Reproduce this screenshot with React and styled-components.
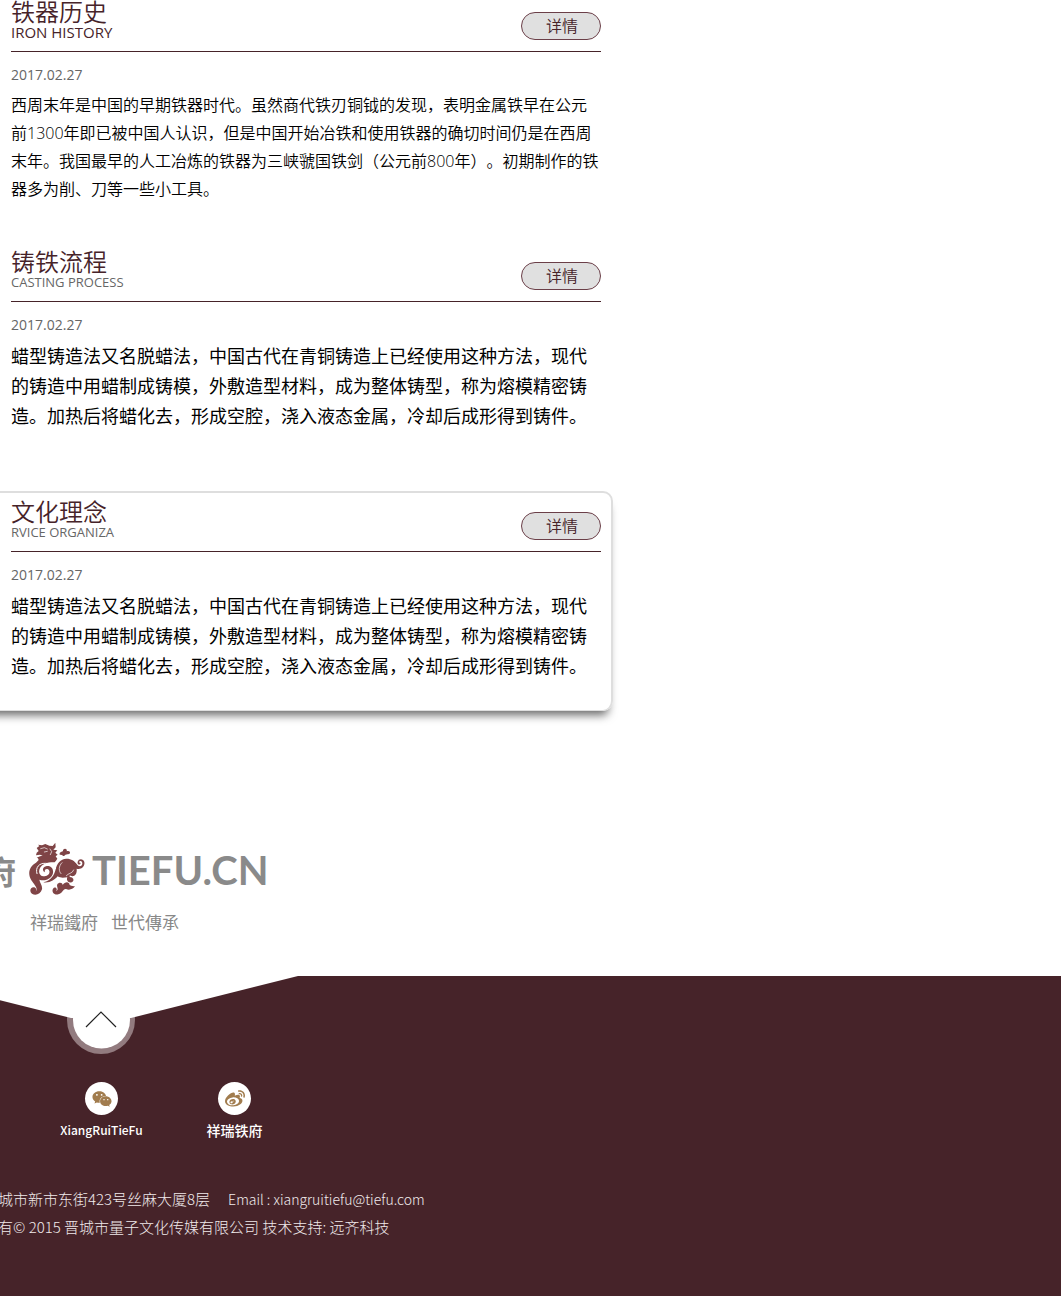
import React from 'react';
import styled, { createGlobalStyle } from 'styled-components';
import { FaWeixin, FaWeibo } from 'react-icons/fa';

const GlobalStyle = createGlobalStyle`
  *, *::before, *::after { box-sizing: border-box; }
  body {
    margin: 0;
    background: #fff;
    font-family: "Open Sans", "Noto Sans CJK SC", sans-serif;
    text-spacing-trim: space-all;
    color: #000;
  }
  h2, p { margin: 0; font-weight: 400; }
`;

const Page = styled.div`
  display: flex;
  flex-direction: column;
  overflow: hidden;
`;

const Articles = styled.main`
  display: flex;
  flex-direction: column;
  gap: 30px;
  max-width: 633px;
  margin: -9px 0 0 -20px;
`;

const Card = styled.article`
  min-height: 220px;
  padding: 0 10px 0 29px;
  border: 2px solid ${({ $active }) => ($active ? '#dedede' : 'transparent')};
  border-bottom-width: 1px;
  border-radius: 10px;
  box-shadow: ${({ $active }) => ($active ? '0 9px 10px -5px rgba(0, 0, 0, 0.6)' : 'none')};
`;

const CardHeader = styled.header`
  display: flex;
  justify-content: space-between;
  align-items: flex-start;
  height: 59px;
  padding-top: 7px;
  border-bottom: 1px solid #462329;
`;

const Title = styled.h2`
  font-size: 24px;
  line-height: 24px;
  font-weight: 350;
  color: #462329;
`;

const Subtitle = styled.p`
  font-size: ${({ $large }) => ($large ? 15 : 13)}px;
  line-height: 16px;
  color: ${({ $large }) => ($large ? '#462329' : '#666')};
`;

const DetailButton = styled.button`
  width: 80px;
  height: 28px;
  margin-top: 12px;
  padding: 0 0 2px 2px;
  border: 1px solid #6b3f48;
  border-radius: 14px;
  background: #e0e0e0;
  color: #462329;
  font: 350 16px/24px "Noto Sans CJK SC", sans-serif;
  cursor: pointer;
`;

const DateText = styled.time`
  display: block;
  padding: 13px 0 6px;
  font-size: 14px;
  line-height: 20px;
  color: #666;
`;

const Body = styled.p`
  font-size: ${({ $small }) => ($small ? 16 : 18)}px;
  line-height: ${({ $small }) => ($small ? 28 : 30)}px;
  font-weight: ${({ $small }) => ($small ? 350 : 400)};
`;

const Line = styled.span`
  display: block;
  white-space: nowrap;
`;

const Brand = styled.section`
  display: flex;
  flex-direction: column;
  gap: 14px;
  margin-top: 131px;
`;

const BrandRow = styled.div`
  display: flex;
  align-items: center;
  height: 56px;
  color: #8a8a8a;
`;

const BrandGlyph = styled.span`
  margin-left: -16px;
  width: 44px;
  font: 700 32px/56px "Noto Sans CJK SC", sans-serif;
`;

const Dragon = styled.svg`
  width: 58px;
  height: 56px;
  margin-right: 6px;
  flex: none;
`;

const BrandName = styled.span`
  font: 700 40px/56px Lato, sans-serif;
`;

const Tagline = styled.p`
  display: flex;
  gap: 13px;
  padding-left: 30px;
  font: 400 17px/20px "Noto Sans CJK TC", sans-serif;
  color: #888;
`;

const Footer = styled.footer`
  margin-top: 44px;
  min-height: 320px;
  background: #462329;
  color: #f0eaeb;
  font-family: "Noto Sans CJK SC", sans-serif;
`;

const TopLink = styled.a`
  display: block;
  width: 394px;
  height: 80px;
  margin-left: -96px;
  svg { display: block; }
`;

const SocialList = styled.nav`
  display: flex;
  margin-top: 26px;
  padding-left: 35px;
`;

const SocialLink = styled.a`
  display: flex;
  flex-direction: column;
  align-items: center;
  gap: 5px;
  width: 133px;
  color: #fff;
  font-size: ${({ $size }) => $size}px;
  font-weight: 500;
  line-height: 20px;
  text-decoration: none;
`;

const SocialBadge = styled.span`
  display: grid;
  place-items: center;
  width: 33px;
  height: 33px;
  border-radius: 50%;
  background: #fff;
  color: #a17c4e;
  font-size: 20px;
`;

const Legal = styled.address`
  margin: 45px 0 0 -2px;
  font-size: 15px;
  font-style: normal;
  line-height: 28px;
`;

const LegalLine = styled.p`
  display: flex;
  gap: 18px;
  font-weight: 300;
  white-space: nowrap;
`;

const Email = styled.span`
  font-size: 14px;
  a { color: inherit; text-decoration: none; }
`;

const casting = [
  '蜡型铸造法又名脱蜡法，中国古代在青铜铸造上已经使用这种方法，现代',
  '的铸造中用蜡制成铸模，外敷造型材料，成为整体铸型，称为熔模精密铸',
  '造。加热后将蜡化去，形成空腔，浇入液态金属，冷却后成形得到铸件。',
];

const articles = [
  {
    title: '铁器历史',
    subtitle: 'IRON HISTORY',
    first: true,
    lines: [
      '西周末年是中国的早期铁器时代。虽然商代铁刃铜钺的发现，表明金属铁早在公元',
      '前1300年即已被中国人认识，但是中国开始冶铁和使用铁器的确切时间仍是在西周',
      '末年。我国最早的人工冶炼的铁器为三峡虢国铁剑（公元前800年）。初期制作的铁',
      '器多为削、刀等一些小工具。',
    ],
  },
  { title: '铸铁流程', subtitle: 'CASTING PROCESS', lines: casting },
  { title: '文化理念', subtitle: 'RVICE ORGANIZA', lines: casting, active: true },
];

function DragonLogo() {
  return (
    <Dragon viewBox="24 18 174 168" aria-hidden="true">
      <g fill="#7f4446">
        <path d="M50 36 L58 30 L54 26 L66 28 L76 24 L88 29 L98 30 L106 20 L107 34 L100 41 L112 43 L106 50 L113 56 L107 61 L112 68 L108 74 L104 79 C84 78 66 84 60 96 C53 110 61 122 74 121 C88 119 93 106 84 100 C78 97 72 102 75 109 C66 106 67 93 78 91 C94 87 103 102 98 115 C91 132 71 136 58 131 C60 141 68 149 66 160 C62 175 46 180 36 173 C27 166 31 153 42 154 C49 155 51 163 46 167 C57 159 43 146 35 134 C21 113 28 91 48 80 L56 72 L54 67 L50 65 L60 61 L68 59 L60 56 L48 58 L50 50 L56 45 Z" />
        <path d="M70 139 C95 134 103 116 107 100 C111 82 121 69 139 68 C155 68 163 75 170 84 C177 95 188 91 187 81 C186 73 177 73 177 80 C180 78 183 81 181 84 C177 88 171 84 173 77 C176 67 190 67 193 78 C196 93 181 102 170 98 C172 115 162 124 152 119 C147 117 147 123 153 124 C162 126 163 136 155 139 C145 142 138 133 142 124 C132 125 122 127 113 121 C104 132 89 142 70 139 Z" />
        <path d="M99 158 C105 150 115 159 108 166 C119 161 108 152 112 145 C117 137 128 140 128 147 C135 136 148 136 149 147 C155 151 161 150 165 151 C158 161 147 163 138 159 C128 158 129 172 115 175 C102 178 94 167 99 158 Z" />
        <path d="M119 51 C124 45 130 49 129 42 C135 34 143 41 140 46 C146 43 153 47 149 53 C143 56 136 53 133 60 C128 61 129 55 119 56 Z" />
      </g>
      <g fill="none" stroke="#fff" strokeWidth="2" strokeLinecap="round">
        <path d="M62 38 L73 35 L82 39 M73 48 L82 46 M90 39 L95 47 L91 56" />
        <path d="M51 113 C45 94 58 81 76 82 C94 82 102 91 107 98" strokeWidth="3" />
        <path d="M126 80 C115 90 116 107 123 113 M139 119 C145 111 158 113 161 102" />
      </g>
    </Dragon>
  );
}

export default function App() {
  return (
    <>
      <GlobalStyle />
      <Page id="top">
        <Articles>
          {articles.map((a) => (
            <Card key={a.title} $active={a.active}>
              <CardHeader>
                <div>
                  <Title>{a.title}</Title>
                  <Subtitle $large={a.first}>{a.subtitle}</Subtitle>
                </div>
                <DetailButton type="button">详情</DetailButton>
              </CardHeader>
              <DateText dateTime="2017-02-27">2017.02.27</DateText>
              <Body $small={a.first}>
                {a.lines.map((line) => (
                  <Line key={line}>{line}</Line>
                ))}
              </Body>
            </Card>
          ))}
        </Articles>

        <Brand>
          <BrandRow>
            <BrandGlyph>府</BrandGlyph>
            <DragonLogo />
            <BrandName>TIEFU.CN</BrandName>
          </BrandRow>
          <Tagline>
            <span>祥瑞鐵府</span>
            <span>世代傳承</span>
          </Tagline>
        </Brand>

        <Footer>
          <TopLink href="#top" aria-label="返回顶部">
            <svg width="394" height="80" viewBox="0 0 394 80">
              <circle cx="197" cy="44" r="34" fill="#927b7f" />
              <circle cx="197.500" cy="44" r="28.500" fill="#fff" />
              <path d="M0 0 H394 L227 42 H167 Z" fill="#fff" />
              <path d="M182 51 L197 36 L212 51" fill="none" stroke="#222" strokeWidth="1.2" />
            </svg>
          </TopLink>
          <SocialList>
            <SocialLink href="#wechat" $size={12}>
              <SocialBadge><FaWeixin /></SocialBadge>
              XiangRuiTieFu
            </SocialLink>
            <SocialLink href="#weibo" $size={14}>
              <SocialBadge><FaWeibo /></SocialBadge>
              祥瑞铁府
            </SocialLink>
          </SocialList>
          <Legal>
            <LegalLine>
              <span>城市新市东街423号丝麻大厦8层</span>
              <Email>
                Email : <a href="mailto:xiangruitiefu@tiefu.com">xiangruitiefu@tiefu.com</a>
              </Email>
            </LegalLine>
            <LegalLine>有© 2015 晋城市量子文化传媒有限公司 技术支持: 远齐科技</LegalLine>
          </Legal>
        </Footer>
      </Page>
    </>
  );
}
